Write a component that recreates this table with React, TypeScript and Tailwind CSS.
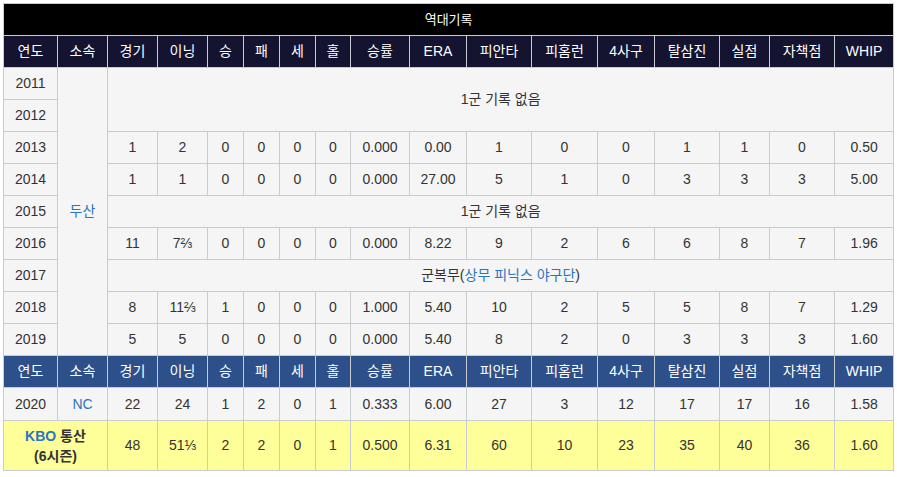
import React from 'react';

const heads = ['연도', '소속', '경기', '이닝', '승', '패', '세', '홀', '승률', 'ERA', '피안타', '피홈런', '4사구', '탈삼진', '실점', '자책점', 'WHIP'];
const widths = [54, 50, 50, 50, 36, 36, 36, 35, 59, 57, 65, 66, 57, 65, 50, 65, 59];

const rows: Record<string, string[]> = {
  '2013': ['1', '2', '0', '0', '0', '0', '0.000', '0.00', '1', '0', '0', '1', '1', '0', '0.50'],
  '2014': ['1', '1', '0', '0', '0', '0', '0.000', '27.00', '5', '1', '0', '3', '3', '3', '5.00'],
  '2016': ['11', '7⅔', '0', '0', '0', '0', '0.000', '8.22', '9', '2', '6', '6', '8', '7', '1.96'],
  '2018': ['8', '11⅔', '1', '0', '0', '0', '1.000', '5.40', '10', '2', '5', '5', '8', '7', '1.29'],
  '2019': ['5', '5', '0', '0', '0', '0', '0.000', '5.40', '8', '2', '0', '3', '3', '3', '1.60'],
};

const td = 'border border-[#c8ccd1] text-center p-0';

function HeaderRow({ bg }: { bg: string }) {
  return (
    <tr className={`h-[32px] text-white ${bg}`}>
      {heads.map((h) => (
        <th key={h} className="border border-[#c8ccd1] font-normal text-center p-0">
          {h}
        </th>
      ))}
    </tr>
  );
}

function Stats({ year }: { year: string }) {
  return (
    <>
      {rows[year].map((v, i) => (
        <td key={i} className={td}>
          {v}
        </td>
      ))}
    </>
  );
}

export default function App() {
  return (
    <div className="bg-white w-[897px] h-[477px] pt-[3px] pl-[3px]">
      <table
        className="table-fixed border-collapse border border-[#c8ccd1] bg-[#f5f5f5] text-[#333] text-[14px] w-[890px]"
        style={{ fontFamily: '"Liberation Sans", "Noto Sans CJK KR", sans-serif' }}
      >
        <colgroup>
          {widths.map((w, i) => (
            <col key={i} style={{ width: w }} />
          ))}
        </colgroup>
        <tbody>
          <tr className="h-[32px] bg-black text-white">
            <th colSpan={17} className="border border-[#c8ccd1] font-normal text-center text-[13px] p-0">
              역대기록
            </th>
          </tr>
          <HeaderRow bg="bg-[#141330]" />
          <tr className="h-[32px]">
            <td className={td}>2011</td>
            <td rowSpan={9} className={`${td} text-[#2a74c0]`}>
              두산
            </td>
            <td rowSpan={2} colSpan={15} className={td}>
              1군 기록 없음
            </td>
          </tr>
          <tr className="h-[32px]">
            <td className={td}>2012</td>
          </tr>
          <tr className="h-[32px]">
            <td className={td}>2013</td>
            <Stats year="2013" />
          </tr>
          <tr className="h-[32px]">
            <td className={td}>2014</td>
            <Stats year="2014" />
          </tr>
          <tr className="h-[32px]">
            <td className={td}>2015</td>
            <td colSpan={15} className={td}>
              1군 기록 없음
            </td>
          </tr>
          <tr className="h-[32px]">
            <td className={td}>2016</td>
            <Stats year="2016" />
          </tr>
          <tr className="h-[32px]">
            <td className={td}>2017</td>
            <td colSpan={15} className={td}>
              군복무(<span className="text-[#2a74c0]">상무 피닉스 야구단</span>)
            </td>
          </tr>
          <tr className="h-[32px]">
            <td className={td}>2018</td>
            <Stats year="2018" />
          </tr>
          <tr className="h-[32px]">
            <td className={td}>2019</td>
            <Stats year="2019" />
          </tr>
          <HeaderRow bg="bg-[#2d4f8a]" />
          <tr className="h-[33px]">
            <td className={td}>2020</td>
            <td className={`${td} text-[#2a74c0]`}>NC</td>
            {['22', '24', '1', '2', '0', '1', '0.333', '6.00', '27', '3', '12', '17', '17', '16', '1.58'].map((v, i) => (
              <td key={i} className={td}>
                {v}
              </td>
            ))}
          </tr>
          <tr className="h-[50px] bg-[#ffff99]">
            <td colSpan={2} className={`${td} font-bold leading-[20px]`}>
              <span className="text-[#2a74c0]">KBO</span> 통산
              <br />
              (6시즌)
            </td>
            {['48', '51⅓', '2', '2', '0', '1', '0.500', '6.31', '60', '10', '23', '35', '40', '36', '1.60'].map((v, i) => (
              <td key={i} className={td}>
                {v}
              </td>
            ))}
          </tr>
        </tbody>
      </table>
    </div>
  );
}
